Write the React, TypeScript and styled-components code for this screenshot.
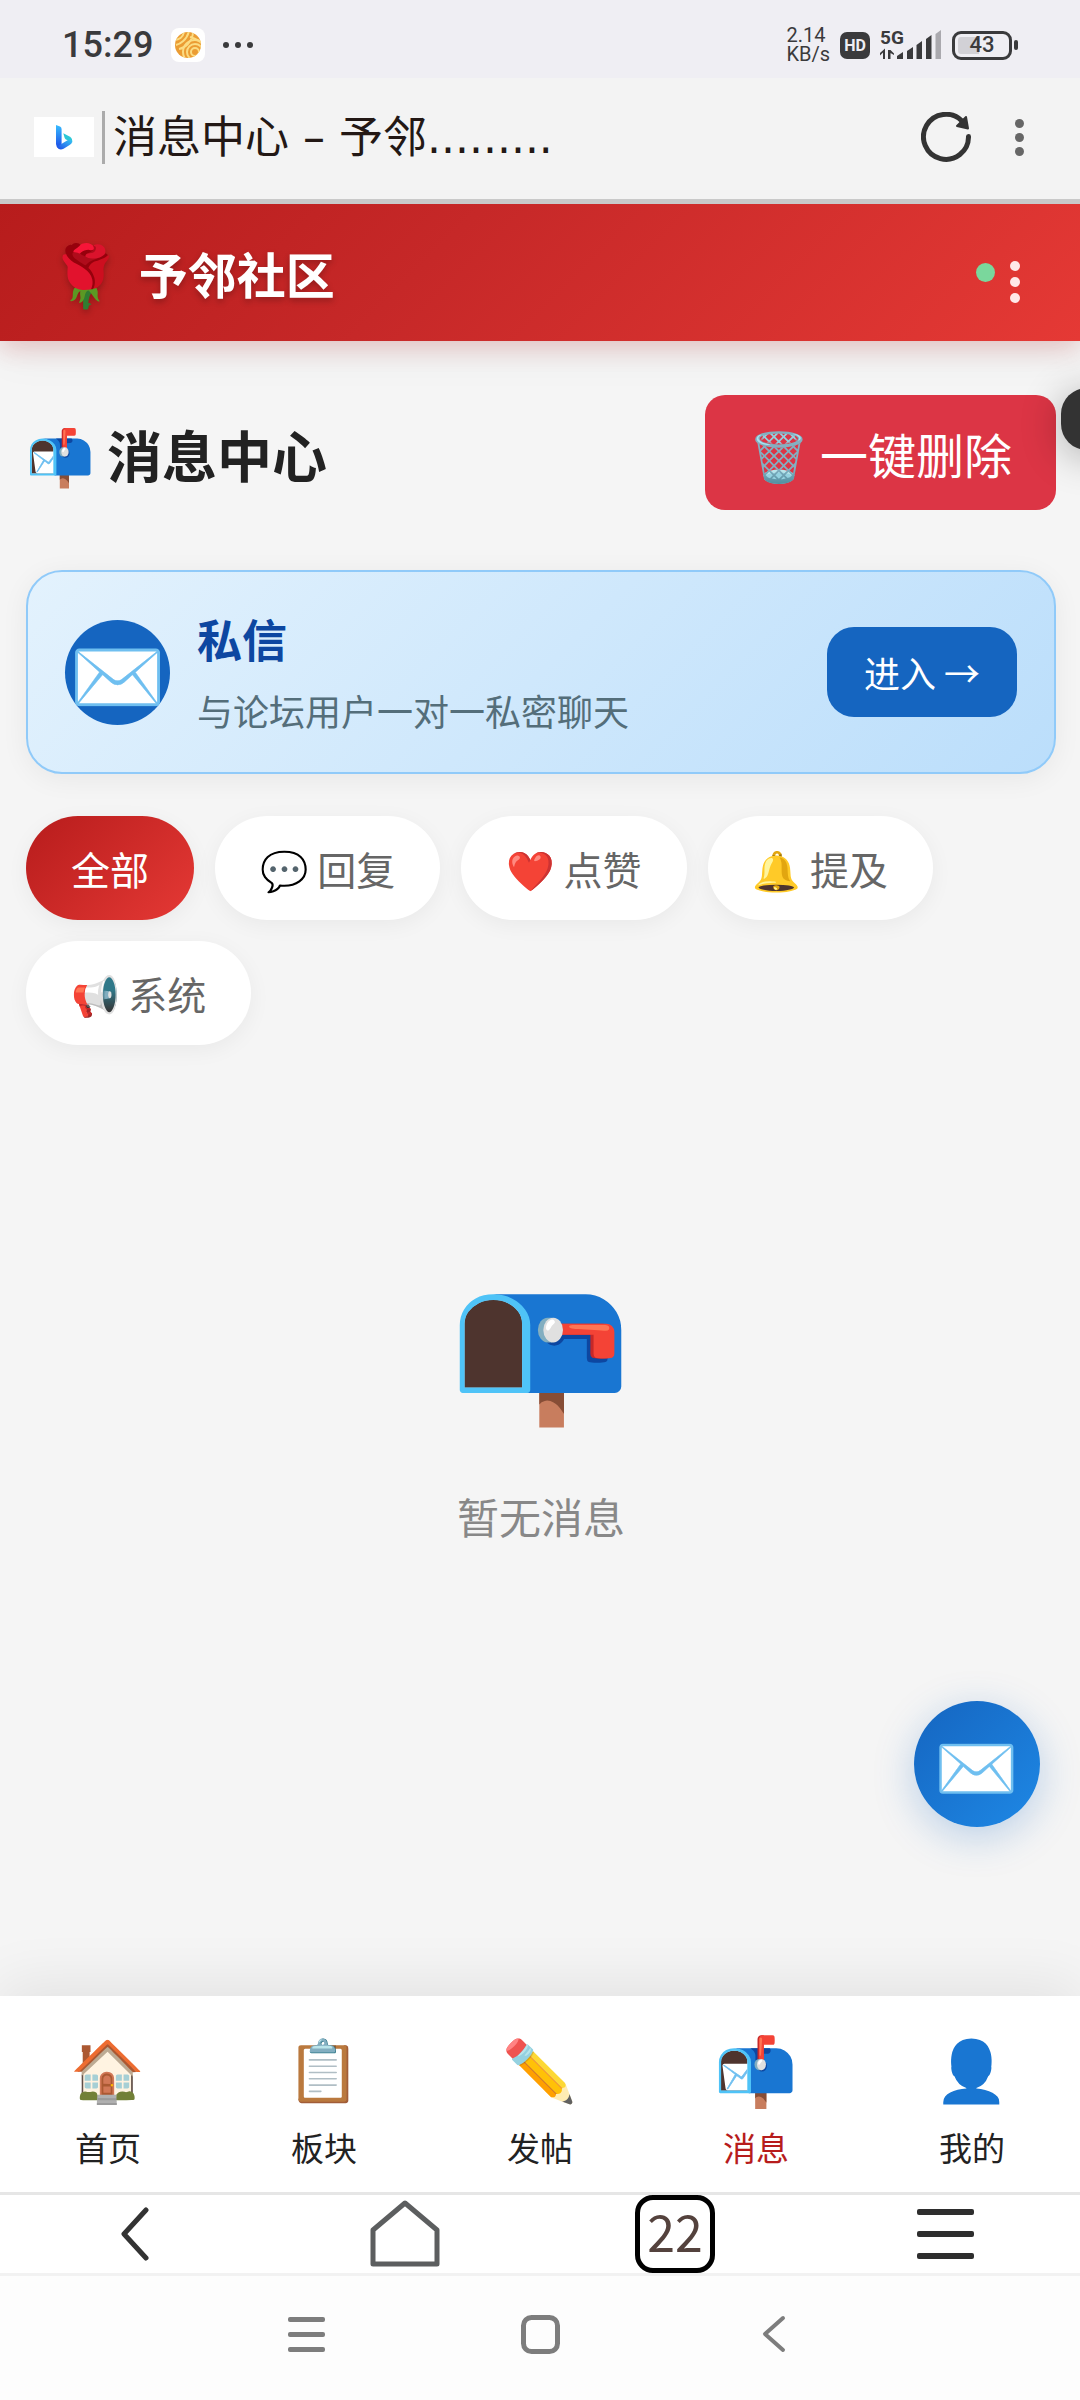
import React, { useState } from 'react';
import styled, { createGlobalStyle, css } from 'styled-components';

const sans = '"Noto Sans CJK SC", "Noto Color Emoji", sans-serif';
const latin = '"Roboto", "Noto Sans", sans-serif';

const GlobalStyle = createGlobalStyle`
  *, *::before, *::after { box-sizing: border-box; }
  body { margin: 0; background: #f5f5f5; color: #222; font-family: ${sans}; }
  h1, h2, p { margin: 0; }
  button { margin: 0; padding: 0; border: 0; background: none; color: inherit; font: inherit; cursor: pointer; }
  a { color: inherit; text-decoration: none; }
  svg { display: block; flex: none; }
`;

const Screen = styled.div`
  display: flex;
  flex-direction: column;
  min-height: 100vh;
  overflow-x: clip;
`;

const Emoji = styled.span<{ $size: number }>`
  font-family: "Noto Color Emoji", sans-serif;
  font-size: ${(p) => p.$size}px;
  line-height: 1;
`;

/* ---------- phone status bar ---------- */

const StatusBar = styled.div`
  display: flex;
  align-items: center;
  justify-content: space-between;
  height: 78px;
  padding: 12px 62px 0;
  background: #efeef3;
  color: #3a3a3c;
  font-family: ${latin};
`;

const StatusGroup = styled.div<{ $gap: number }>`
  display: flex;
  align-items: center;
  gap: ${(p) => p.$gap}px;
`;

const Clock = styled.span`
  font-size: 36px;
  font-weight: 500;
  line-height: 40px;
`;

const Speed = styled.span`
  display: flex;
  flex-direction: column;
  font-size: 20px;
  line-height: 19px;
`;

const HdBadge = styled.span`
  display: flex;
  align-items: center;
  justify-content: center;
  width: 30px;
  height: 27px;
  border-radius: 7px;
  background: #3a3a3c;
  color: #efeef3;
  font-size: 16px;
  font-weight: 700;
`;

const Battery = styled.span`
  display: flex;
  align-items: center;
  gap: 2px;
`;

const BatteryCell = styled.span`
  display: flex;
  align-items: center;
  justify-content: center;
  width: 60px;
  height: 29px;
  padding: 3px;
  border: 3px solid #3a3a3c;
  border-radius: 9px;
  background: linear-gradient(90deg, #d2d1d6 43%, transparent 43%) content-box;
  font-size: 22px;
  font-weight: 500;
  line-height: 22px;
`;

const BatteryTip = styled.span`
  width: 4px;
  height: 10px;
  border-radius: 2px;
  background: #3a3a3c;
`;

/* ---------- browser bars ---------- */

const AddressBar = styled.div`
  position: relative;
  z-index: 2;
  display: flex;
  align-items: center;
  height: 126px;
  padding: 0 56px 3px 34px;
  border-bottom: 5px solid #c9c9c9;
  background: #f3f3f3;
  color: #231815;
`;

const EngineBox = styled.span`
  display: flex;
  align-items: center;
  justify-content: center;
  width: 60px;
  height: 40px;
  background: #fff;
`;

const Divider = styled.span`
  width: 3px;
  height: 53px;
  margin: 0 8px;
  background: #ababab;
`;

const PageTitle = styled.span`
  flex: 1;
  padding-top: 2px;
  overflow: hidden;
  white-space: nowrap;
  font-family: "DejaVu Sans", "Noto Sans CJK SC", sans-serif;
  font-size: 44px;
  line-height: 60px;
`;

const AddressActions = styled.div`
  display: flex;
  align-items: center;
  gap: 44px;
`;

const BrowserBar = styled.nav`
  position: relative;
  display: grid;
  grid-template-columns: repeat(4, 1fr);
  align-items: center;
  justify-items: center;
  height: 84px;
  border-top: 3px solid #e6e6e6;
  border-bottom: 3px solid #f2f2f2;
  background: #fff;
`;

const TabCount = styled.button`
  display: flex;
  align-items: center;
  justify-content: center;
  width: 80px;
  height: 78px;
  padding-bottom: 8px;
  border: 5px solid #000;
  border-radius: 18px;
  color: #54423d;
  font-size: 50px;
  line-height: 60px;
`;

const SystemBar = styled.nav`
  display: grid;
  grid-template-columns: repeat(3, 1fr);
  align-items: center;
  justify-items: center;
  height: 124px;
  padding: 0 17.5% 8px;
  background: #fdfdfd;
`;

/* ---------- community site ---------- */

const SiteHeader = styled.header`
  position: relative;
  z-index: 1;
  display: flex;
  align-items: center;
  justify-content: space-between;
  height: 137px;
  padding: 0 60px 0 48px;
  background: linear-gradient(135deg, #b71c1c 0%, #c62828 40%, #e53935 100%);
  box-shadow: 0 8px 22px rgba(198, 40, 40, 0.2), 0 11px 44px rgba(0, 0, 0, 0.06);
`;

const Brand = styled.a`
  display: flex;
  align-items: center;
  gap: 16px;
  color: #fff;
  font-size: 49px;
  font-weight: 700;
  line-height: 64px;
  text-shadow: 0 3px 6px rgba(0, 0, 0, 0.25);
`;

const BrandMark = styled.span`
  display: flex;
  padding-top: 8px;
`;

const HeaderActions = styled.div`
  display: flex;
  align-items: center;
  gap: 15px;
`;

const OnlineDot = styled.span`
  width: 19px;
  height: 19px;
  border-radius: 50%;
  background: #7ad79c;
`;

const MenuButton = styled.button`
  padding-top: 18px;
`;

const Main = styled.main`
  position: relative;
  flex: 1;
  padding: 54px 24px 0 26px;
  background: #f5f5f5;
`;

const TitleRow = styled.div`
  display: flex;
  align-items: center;
  justify-content: space-between;
  margin-bottom: 60px;
`;

const Title = styled.h1`
  font-size: 55px;
  font-weight: 700;
  line-height: 80px;
`;

const DeleteButton = styled.button`
  height: 115px;
  padding: 0 44px;
  border-radius: 20px;
  background: #dc3545;
  color: #fff;
  font-size: 48px;
  line-height: 64px;
`;

const DirectCard = styled.section`
  display: flex;
  align-items: center;
  gap: 27px;
  padding: 33px 37px;
  border: 2px solid #90caf9;
  border-radius: 36px;
  background: linear-gradient(135deg, #e3f2fd, #bbdefb);
  box-shadow: 0 5px 28px rgba(0, 0, 0, 0.06);
`;

const DirectIcon = styled.span`
  display: flex;
  align-items: center;
  justify-content: center;
  flex: none;
  width: 105px;
  height: 105px;
  padding-top: 12px;
  border-radius: 50%;
  background: #1565c0;
`;

const DirectText = styled.div`
  display: flex;
  flex: 1;
  flex-direction: column;
  gap: 8px;
`;

const DirectName = styled.h2`
  color: #0d47a1;
  font-size: 45px;
  font-weight: 700;
  line-height: 68px;
`;

const DirectNote = styled.p`
  color: #546e7a;
  font-size: 36px;
  line-height: 58px;
`;

const EnterLink = styled.a`
  padding: 17px 37px;
  border-radius: 27px;
  background: #1565c0;
  color: #fff;
  font-size: 36px;
  line-height: 56px;
`;

const Filters = styled.div`
  display: flex;
  flex-wrap: wrap;
  gap: 21px;
  margin-top: 42px;
`;

const Filter = styled.button<{ $active: boolean }>`
  height: 104px;
  padding: 0 45px;
  border-radius: 52px;
  background: #fff;
  box-shadow: 0 5px 22px rgba(0, 0, 0, 0.05);
  color: #666;
  font-size: 39px;
  line-height: 56px;
  ${(p) => p.$active && css`
    background: linear-gradient(135deg, #b71c1c, #e53935);
    color: #fff;
  `}
`;

const Empty = styled.div`
  display: flex;
  flex-direction: column;
  align-items: center;
  gap: 63px;
  padding: 229px 0 60px;
  color: #888;
  font-size: 42px;
  line-height: 64px;
`;

const ChatBubble = styled.button`
  position: absolute;
  right: 40px;
  bottom: 169px;
  display: flex;
  align-items: center;
  justify-content: center;
  width: 126px;
  height: 126px;
  padding-top: 9px;
  border-radius: 50%;
  background: linear-gradient(135deg, #1565c0, #1e88e5);
  box-shadow: 0 10px 40px rgba(21, 101, 192, 0.26);
`;

const EdgeHandle = styled.button`
  position: absolute;
  top: 47px;
  right: -43px;
  width: 62px;
  height: 62px;
  border-radius: 26px;
  background: #333;
  box-shadow: 0 6px 40px rgba(0, 0, 0, 0.3);
`;

const TabBar = styled.nav`
  position: relative;
  display: grid;
  grid-template-columns: repeat(5, 1fr);
  padding: 42px 0 25px;
  background: #fff;
  box-shadow: 0 -11px 55px rgba(0, 0, 0, 0.08);
`;

const TabLink = styled.a<{ $active: boolean }>`
  display: flex;
  flex-direction: column;
  align-items: center;
  gap: 21px;
  color: ${(p) => (p.$active ? '#b71c1c' : '#222')};
  font-size: 33px;
  line-height: 40px;
`;

const TabIcon = styled.span`
  display: flex;
  align-items: center;
  justify-content: center;
  height: 68px;
`;

/* ---------- drawings ---------- */

const BallIcon = () => (
  <svg width="34" height="34" viewBox="0 0 34 34" aria-hidden="true">
    <defs><clipPath id="ball"><circle cx="17" cy="17" r="13" /></clipPath></defs>
    <rect width="34" height="34" rx="8" fill="#fff" />
    <g clipPath="url(#ball)" fill="none" stroke="#fbdc83" strokeWidth="2">
      <rect width="34" height="34" fill="#eb9c33" stroke="none" />
      <circle cx="24" cy="24" r="4" /><circle cx="24" cy="24" r="8" /><circle cx="24" cy="24" r="12" />
      <path d="M5 17C9 16 16 12 18 3M8 21C14 20 21 14 22 5M3 12C8 12 12 9 13 4M19 9C23 10 28 13 31 15" />
    </g>
  </svg>
);

const Dots = ({ color, size, pitch, vertical = false }: { color: string; size: number; pitch: number; vertical?: boolean }) => {
  const long = pitch * 2 + size;
  return (
    <svg width={vertical ? size : long} height={vertical ? long : size} fill={color} aria-hidden="true">
      {[0, 1, 2].map((i) => (
        <circle key={i} r={size / 2} cx={size / 2 + (vertical ? 0 : i * pitch)} cy={size / 2 + (vertical ? i * pitch : 0)} />
      ))}
    </svg>
  );
};

const SignalIcon = () => (
  <svg width="62" height="40" viewBox="0 -4 62 40" fill="#3a3a3c" role="img" aria-label="5G">
    <text x="0" y="15" fontFamily="Roboto, sans-serif" fontSize="19" fontWeight="700">5G</text>
    <path d="M3 30V23.500L0 26.500V24L5 19.500V30zM8 21H10.500V30H8zM10.500 21L14 24.500V26L10.500 24z" />
    <path d="M17 27L23 23V30H17zM27 22L33 18V30H27zM36.500 16L42 12V30H36.500zM46 10L51.500 6V30H46z" />
    <path d="M55.500 5L61 1V30H55.500z" fill="#aaa9ae" />
  </svg>
);

const BingIcon = () => (
  <svg width="17" height="25" viewBox="0 0 17 25" aria-hidden="true">
    <defs>
      <linearGradient id="stem" x1="0" y1="0" x2="0" y2="1"><stop offset="0" stopColor="#37bdff" /><stop offset="1" stopColor="#1b48e6" /></linearGradient>
      <linearGradient id="bowl" x1="0" y1="1" x2="1" y2="0"><stop offset="0" stopColor="#1b48e6" /><stop offset=".55" stopColor="#2f8df0" /><stop offset="1" stopColor="#33c6f0" /></linearGradient>
    </defs>
    <path d="M0 0L4 1.500Q5.600 2.200 5.600 4V19L2.800 23.500Q0 21.800 0 19z" fill="url(#stem)" />
    <path d="M7.300 8.200L14 11.800Q16.600 13.400 16.200 17.500L11.500 15.300L9.600 14.200Q8.900 13.700 8.500 12.500z" fill="#2bc8d6" />
    <path d="M.8 21.700L11.500 15.300Q15 14 16.200 16Q16.300 18.300 14 19.700L7.600 23.700Q3.200 25.800 .8 21.700z" fill="url(#bowl)" />
  </svg>
);

const ReloadIcon = () => (
  <svg width="50" height="50" viewBox="0 0 50 50" aria-hidden="true">
    <path d="M47.500 24.500A22.500 22.500 0 1 1 41 9" fill="none" stroke="#333" strokeWidth="5" strokeLinecap="round" />
    <path d="M45 5L47 16.500L36 14z" fill="#333" stroke="#333" strokeWidth="2" strokeLinejoin="round" />
  </svg>
);

const ChevronIcon = ({ width, height, color, stroke }: { width: number; height: number; color: string; stroke: number }) => (
  <svg width={width} height={height} fill="none" stroke={color} strokeWidth={stroke} strokeLinecap="round" strokeLinejoin="round" aria-hidden="true">
    <path d={`M${width - 3} 3L3 ${height / 2}L${width - 3} ${height - 3}`} />
  </svg>
);

const HouseIcon = () => (
  <svg width="70" height="68" viewBox="0 0 70 68" fill="none" stroke="#5c5e5f" strokeWidth="5" strokeLinejoin="round" aria-hidden="true">
    <path d="M3 30L35 3L67 30V64H3z" />
  </svg>
);

const BarsIcon = ({ width, pitch, color, stroke }: { width: number; pitch: number; color: string; stroke: number }) => (
  <svg width={width} height={pitch * 2 + stroke} fill={color} aria-hidden="true">
    {[0, 1, 2].map((i) => <rect key={i} y={i * pitch} width={width} height={stroke} rx="2" />)}
  </svg>
);

const SquareIcon = () => (
  <svg width="39" height="39" fill="none" stroke="#7d7d7d" strokeWidth="5" aria-hidden="true">
    <rect x="2.500" y="2.500" width="34" height="34" rx="8" />
  </svg>
);

/* ---------- page ---------- */

const filters = ['全部', '💬 回复', '❤️ 点赞', '🔔 提及', '📢 系统'];

const tabs = [
  { icon: '🏠', label: '首页' },
  { icon: '📋', label: '板块' },
  { icon: '✏️', label: '发帖' },
  { icon: '📬', label: '消息' },
  { icon: '👤', label: '我的' },
];

export default function App() {
  const [filter, setFilter] = useState(filters[0]);

  return (
    <Screen>
      <GlobalStyle />

      <StatusBar>
        <StatusGroup $gap={18}>
          <Clock>15:29</Clock>
          <BallIcon />
          <Dots color="#3a3a3c" size={6} pitch={12} />
        </StatusGroup>
        <StatusGroup $gap={10}>
          <Speed><span>2.14</span><span>KB/s</span></Speed>
          <HdBadge>HD</HdBadge>
          <SignalIcon />
          <Battery>
            <BatteryCell>43</BatteryCell>
            <BatteryTip />
          </Battery>
        </StatusGroup>
      </StatusBar>

      <AddressBar>
        <EngineBox><BingIcon /></EngineBox>
        <Divider />
        <PageTitle>消息中心 – 予邻.........</PageTitle>
        <AddressActions>
          <button aria-label="刷新"><ReloadIcon /></button>
          <button aria-label="更多"><Dots color="#666" size={9} pitch={14} vertical /></button>
        </AddressActions>
      </AddressBar>

      <SiteHeader>
        <Brand href="#">
          <BrandMark><Emoji $size={60}>🌹</Emoji></BrandMark>
          予邻社区
        </Brand>
        <HeaderActions>
          <OnlineDot />
          <MenuButton aria-label="菜单"><Dots color="#ffe8e8" size={10} pitch={16} vertical /></MenuButton>
        </HeaderActions>
      </SiteHeader>

      <Main>
        <TitleRow>
          <Title>📬 消息中心</Title>
          <DeleteButton>🗑️ 一键删除</DeleteButton>
        </TitleRow>

        <DirectCard>
          <DirectIcon><Emoji $size={78}>✉️</Emoji></DirectIcon>
          <DirectText>
            <DirectName>私信</DirectName>
            <DirectNote>与论坛用户一对一私密聊天</DirectNote>
          </DirectText>
          <EnterLink href="#chat">进入 →</EnterLink>
        </DirectCard>

        <Filters>
          {filters.map((name) => (
            <Filter key={name} $active={name === filter} onClick={() => setFilter(name)}>{name}</Filter>
          ))}
        </Filters>

        <Empty>
          <Emoji $size={147}>📭</Emoji>
          <p>暂无消息</p>
        </Empty>

        <ChatBubble aria-label="私信"><Emoji $size={68}>✉️</Emoji></ChatBubble>
        <EdgeHandle aria-label="展开" />
      </Main>

      <TabBar>
        {tabs.map((tab) => {
          const active = tab.label === '消息';
          return (
            <TabLink key={tab.label} href="#" $active={active}>
              <TabIcon><Emoji $size={active ? 67 : 60}>{tab.icon}</Emoji></TabIcon>
              {tab.label}
            </TabLink>
          );
        })}
      </TabBar>

      <BrowserBar>
        <button aria-label="后退"><ChevronIcon width={28} height={54} color="#333" stroke={5} /></button>
        <button aria-label="主页"><HouseIcon /></button>
        <TabCount>22</TabCount>
        <button aria-label="菜单"><BarsIcon width={57} pitch={22} color="#2e2e2e" stroke={6} /></button>
      </BrowserBar>

      <SystemBar>
        <button aria-label="最近任务"><BarsIcon width={37} pitch={15} color="#7d7d7d" stroke={5} /></button>
        <button aria-label="桌面"><SquareIcon /></button>
        <button aria-label="返回"><ChevronIcon width={24} height={38} color="#7d7d7d" stroke={4} /></button>
      </SystemBar>
    </Screen>
  );
}
